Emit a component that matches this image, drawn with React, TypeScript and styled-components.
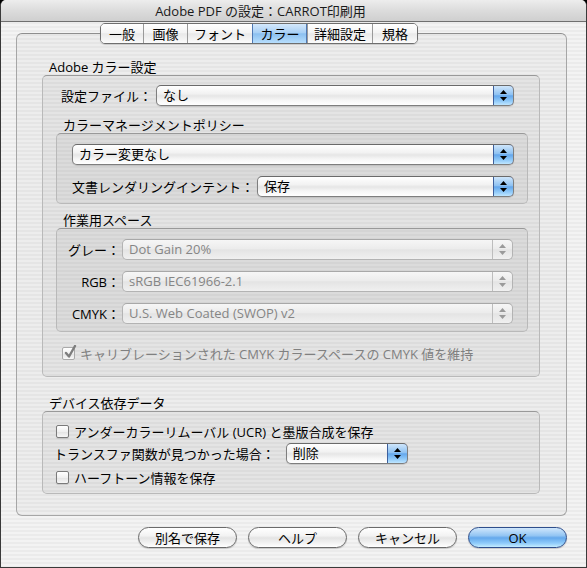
import React from 'react';
import styled, { createGlobalStyle, css } from 'styled-components';

const Global = createGlobalStyle`
  html, body { margin: 0; padding: 0; background: #000; }
  body {
    font-family: "Lucida Grande", "Open Sans", "Noto Sans CJK JP", sans-serif;
    font-size: 13px;
    color: #000;
  }
  * { box-sizing: border-box; }
`;

const stripes = css`
  background-color: #efefef;
  background-image: repeating-linear-gradient(
    to bottom,
    #f3f3f3 0px,
    #f3f3f3 2px,
    #ebebeb 2px,
    #ebebeb 4px
  );
`;

const Window = styled.div`
  width: 587px;
  height: 568px;
  display: flex;
  flex-direction: column;
  border-radius: 6px 6px 0 0;
  overflow: hidden;
  border: 1px solid #3a3a3a;
  border-top: none;
  ${stripes}
`;

const TitleBar = styled.div`
  flex: none;
  height: 22px;
  display: flex;
  align-items: center;
  justify-content: center;
  padding-right: 66px;
  background: linear-gradient(to bottom, #ededed 0%, #dcdcdc 50%, #cfcfcf 100%);
  border-bottom: 1px solid #6f6f6f;
  color: #1a1a1a;
  font-size: 13px;
`;

const Body = styled.div`
  flex: 1;
  display: flex;
  flex-direction: column;
  padding: 0 19px 0 15px;
`;

const TabBar = styled.div`
  align-self: flex-start;
  display: flex;
  height: 21px;
  margin: 1px 0 -11px 84px;
  position: relative;
  z-index: 1;
  border: 1px solid #6e6e6e;
  border-radius: 5px;
  overflow: hidden;
  box-shadow: 0 1px 1px rgba(0, 0, 0, 0.15);
`;

const Tab = styled.div<{ $w: number; $active?: boolean; $first?: boolean }>`
  width: ${(p) => p.$w}px;
  height: 100%;
  display: flex;
  align-items: center;
  justify-content: center;
  border-left: ${(p) => (p.$first ? 'none' : '1px solid #9a9a9a')};
  font-size: 13px;
  color: #000;
  background: ${(p) =>
    p.$active
      ? 'linear-gradient(to bottom, #d4e8fb 0%, #a9d0f5 45%, #8cc0f0 52%, #b7defd 100%)'
      : 'linear-gradient(to bottom, #ffffff 0%, #f4f4f4 45%, #e9e9e9 52%, #fbfbfb 100%)'};
  ${(p) =>
    p.$active &&
    css`
      border-left-color: #4f78b3;
      box-shadow: inset -1px 0 0 #4f78b3;
    `}
`;

const Panel = styled.div`
  height: 483px;
  flex: none;
  display: flex;
  flex-direction: column;
  border: 1px solid #a6a6a6;
  border-top-color: #8e8e8e;
  border-radius: 6px;
  background: rgba(0, 0, 0, 0.025);
  padding: 25px 26px 0 25px;
`;

const Legend = styled.div<{ $mt?: number }>`
  height: 16px;
  line-height: 16px;
  padding-left: 7px;
  margin-top: ${(p) => p.$mt ?? 0}px;
  white-space: nowrap;
`;

const Group = styled.div<{ $pad: string }>`
  display: flex;
  flex-direction: column;
  border: 1px solid #b9b9b9;
  border-top-color: #999999;
  border-radius: 5px;
  background: rgba(0, 0, 0, 0.035);
  padding: ${(p) => p.$pad};
`;

const Row = styled.div<{ $mt?: number; $pl?: number; $pr?: number; $gap?: number }>`
  display: flex;
  align-items: center;
  height: 21px;
  margin-top: ${(p) => p.$mt ?? 0}px;
  padding-left: ${(p) => p.$pl ?? 0}px;
  padding-right: ${(p) => p.$pr ?? 0}px;
  gap: ${(p) => p.$gap ?? 0}px;
  white-space: nowrap;
`;

const Label = styled.span<{ $disabled?: boolean }>`
  color: ${(p) => (p.$disabled ? '#808080' : '#000')};
  white-space: nowrap;
`;

const SpaceGrid = styled.div`
  display: grid;
  grid-template-columns: 63px 1fr;
  column-gap: 2px;
  row-gap: 11px;
  align-items: center;
`;

const GridLabel = styled.span`
  text-align: right;
  white-space: nowrap;
`;

const PopupBox = styled.div<{ $disabled?: boolean; $w?: number }>`
  ${(p) => (p.$w ? `width: ${p.$w}px; flex: none;` : 'flex: 1;')}
  height: 21px;
  display: flex;
  border-radius: 5px;
  border: 1px solid ${(p) => (p.$disabled ? '#b3b3b3' : '#7e7e7e')};
  border-top-color: ${(p) => (p.$disabled ? '#a8a8a8' : '#6a6a6a')};
  overflow: hidden;
  box-shadow: ${(p) => (p.$disabled ? 'none' : '0 1px 1px rgba(0,0,0,0.12)')};
  background: ${(p) =>
    p.$disabled
      ? 'linear-gradient(to bottom, #f6f6f6 0%, #ececec 45%, #e4e4e4 52%, #f0f0f0 100%)'
      : 'linear-gradient(to bottom, #ffffff 0%, #f2f2f2 40%, #e6e6e6 52%, #f6f6f6 75%, #ffffff 100%)'};
`;

const PopupValue = styled.div<{ $disabled?: boolean }>`
  flex: 1;
  padding-left: 6px;
  line-height: 19px;
  color: ${(p) => (p.$disabled ? '#858585' : '#000')};
  white-space: nowrap;
  overflow: hidden;
`;

const PopupArrows = styled.div<{ $disabled?: boolean }>`
  width: 20px;
  flex: none;
  display: flex;
  align-items: center;
  justify-content: center;
  ${(p) =>
    p.$disabled
      ? css`
          border-left: 1px solid #bdbdbd;
        `
      : css`
          margin: -1px -1px -1px 0;
          width: 21px;
          border: 1px solid #3d5f9c;
          border-radius: 0 5px 5px 0;
          background: linear-gradient(to bottom, #cfe6fb 0%, #8fc2f2 45%, #64a7ec 52%, #92cbf9 80%, #bfe6ff 100%);
        `}
`;

const Arrows = ({ color }: { color: string }) => (
  <svg width="7" height="11" viewBox="0 0 7 11">
    <polygon points="0,4 3.5,0 7,4" fill={color} />
    <polygon points="0,7 7,7 3.5,11" fill={color} />
  </svg>
);

const Popup = ({ value, disabled, width }: { value: string; disabled?: boolean; width?: number }) => (
  <PopupBox $disabled={disabled} $w={width}>
    <PopupValue $disabled={disabled}>{value}</PopupValue>
    <PopupArrows $disabled={disabled}>
      <Arrows color={disabled ? '#9a9a9a' : '#000'} />
    </PopupArrows>
  </PopupBox>
);

const CheckBox = styled.span<{ $disabled?: boolean }>`
  position: relative;
  flex: none;
  width: 13px;
  height: 13px;
  border: 1px solid ${(p) => (p.$disabled ? '#a9a9a9' : '#7a7a7a')};
  border-radius: 2px;
  background: linear-gradient(to bottom, #ffffff 0%, #f0f0f0 50%, #e4e4e4 55%, #f7f7f7 100%);
  box-shadow: ${(p) => (p.$disabled ? 'none' : '0 1px 1px rgba(0,0,0,0.12)')};
`;

const CheckMark = styled.svg`
  position: absolute;
  left: 1px;
  top: -3px;
`;

const CheckRow = styled.label<{ $mt?: number; $pl?: number }>`
  display: flex;
  align-items: center;
  height: 16px;
  gap: 5px;
  margin-top: ${(p) => p.$mt ?? 0}px;
  padding-left: ${(p) => p.$pl ?? 0}px;
  white-space: nowrap;
`;

const ButtonRow = styled.div`
  display: flex;
  justify-content: flex-end;
  gap: 11px;
  margin-top: 11px;
`;

const Button = styled.button<{ $default?: boolean }>`
  width: 99px;
  height: 21px;
  padding: 0;
  border-radius: 11px;
  font: inherit;
  font-size: 13px;
  color: #000;
  border: 1px solid ${(p) => (p.$default ? '#2f4f8c' : '#6a6a6a')};
  box-shadow: 0 1px 1px rgba(0, 0, 0, 0.18);
  background: ${(p) =>
    p.$default
      ? 'linear-gradient(to bottom, #d0e7fc 0%, #93c5f3 40%, #64a8ec 52%, #8fcbfa 80%, #c4ecff 100%)'
      : 'linear-gradient(to bottom, #ffffff 0%, #f3f3f3 40%, #e4e4e4 52%, #f3f3f3 80%, #ffffff 100%)'};
`;

const tabs = [
  { t: '一般', w: 42 },
  { t: '画像', w: 44 },
  { t: 'フォント', w: 65 },
  { t: 'カラー', w: 55, active: true },
  { t: '詳細設定', w: 65 },
  { t: '規格', w: 45 },
];

export default function App() {
  return (
    <>
      <Global />
      <Window>
        <TitleBar>Adobe PDF の設定：CARROT印刷用</TitleBar>
        <Body>
          <TabBar>
            {tabs.map((tb, i) => (
              <Tab key={tb.t} $w={tb.w} $active={tb.active} $first={i === 0}>
                {tb.t}
              </Tab>
            ))}
          </TabBar>
          <Panel>
            <Legend>Adobe カラー設定</Legend>
            <Group $pad="9px 11px 15px 13px">
              <Row $pl={5} $pr={14} $gap={4}>
                <Label>設定ファイル：</Label>
                <Popup value="なし" />
              </Row>
              <Legend $mt={11}>カラーマネージメントポリシー</Legend>
              <Group $pad="10px 13px 6px 15px">
                <Row>
                  <Popup value="カラー変更なし" />
                </Row>
                <Row $mt={11} $gap={3}>
                  <Label>文書レンダリングインテント：</Label>
                  <Popup value="保存" />
                </Row>
              </Group>
              <Legend $mt={8}>作業用スペース</Legend>
              <Group $pad="10px 14px 7px 0">
                <SpaceGrid>
                  <GridLabel>グレー：</GridLabel>
                  <Popup value="Dot Gain 20%" disabled />
                  <GridLabel>RGB：</GridLabel>
                  <Popup value="sRGB IEC61966-2.1" disabled />
                  <GridLabel>CMYK：</GridLabel>
                  <Popup value="U.S. Web Coated (SWOP) v2" disabled />
                </SpaceGrid>
              </Group>
              <CheckRow $mt={13} $pl={6}>
                <CheckBox $disabled>
                  <CheckMark width="13" height="14" viewBox="0 0 13 14">
                    <path d="M2 8 L5 11.5 L11 1" stroke="#7d7d7d" strokeWidth="2.4" fill="none" strokeLinecap="round" strokeLinejoin="round" />
                  </CheckMark>
                </CheckBox>
                <Label $disabled>キャリブレーションされた CMYK カラースペースの CMYK 値を維持</Label>
              </CheckRow>
            </Group>
            <Legend $mt={18}>デバイス依存データ</Legend>
            <Group $pad="11px 0 8px 11px">
              <CheckRow $pl={2}>
                <CheckBox />
                <Label>アンダーカラーリムーバル (UCR) と墨版合成を保存</Label>
              </CheckRow>
              <Row $mt={4} $gap={11}>
                <Label>トランスファ関数が見つかった場合：</Label>
                <Popup value="削除" width={122} />
              </Row>
              <CheckRow $mt={5} $pl={2}>
                <CheckBox />
                <Label>ハーフトーン情報を保存</Label>
              </CheckRow>
            </Group>
          </Panel>
          <ButtonRow>
            <Button>別名で保存</Button>
            <Button>ヘルプ</Button>
            <Button>キャンセル</Button>
            <Button $default>OK</Button>
          </ButtonRow>
        </Body>
      </Window>
    </>
  );
}
